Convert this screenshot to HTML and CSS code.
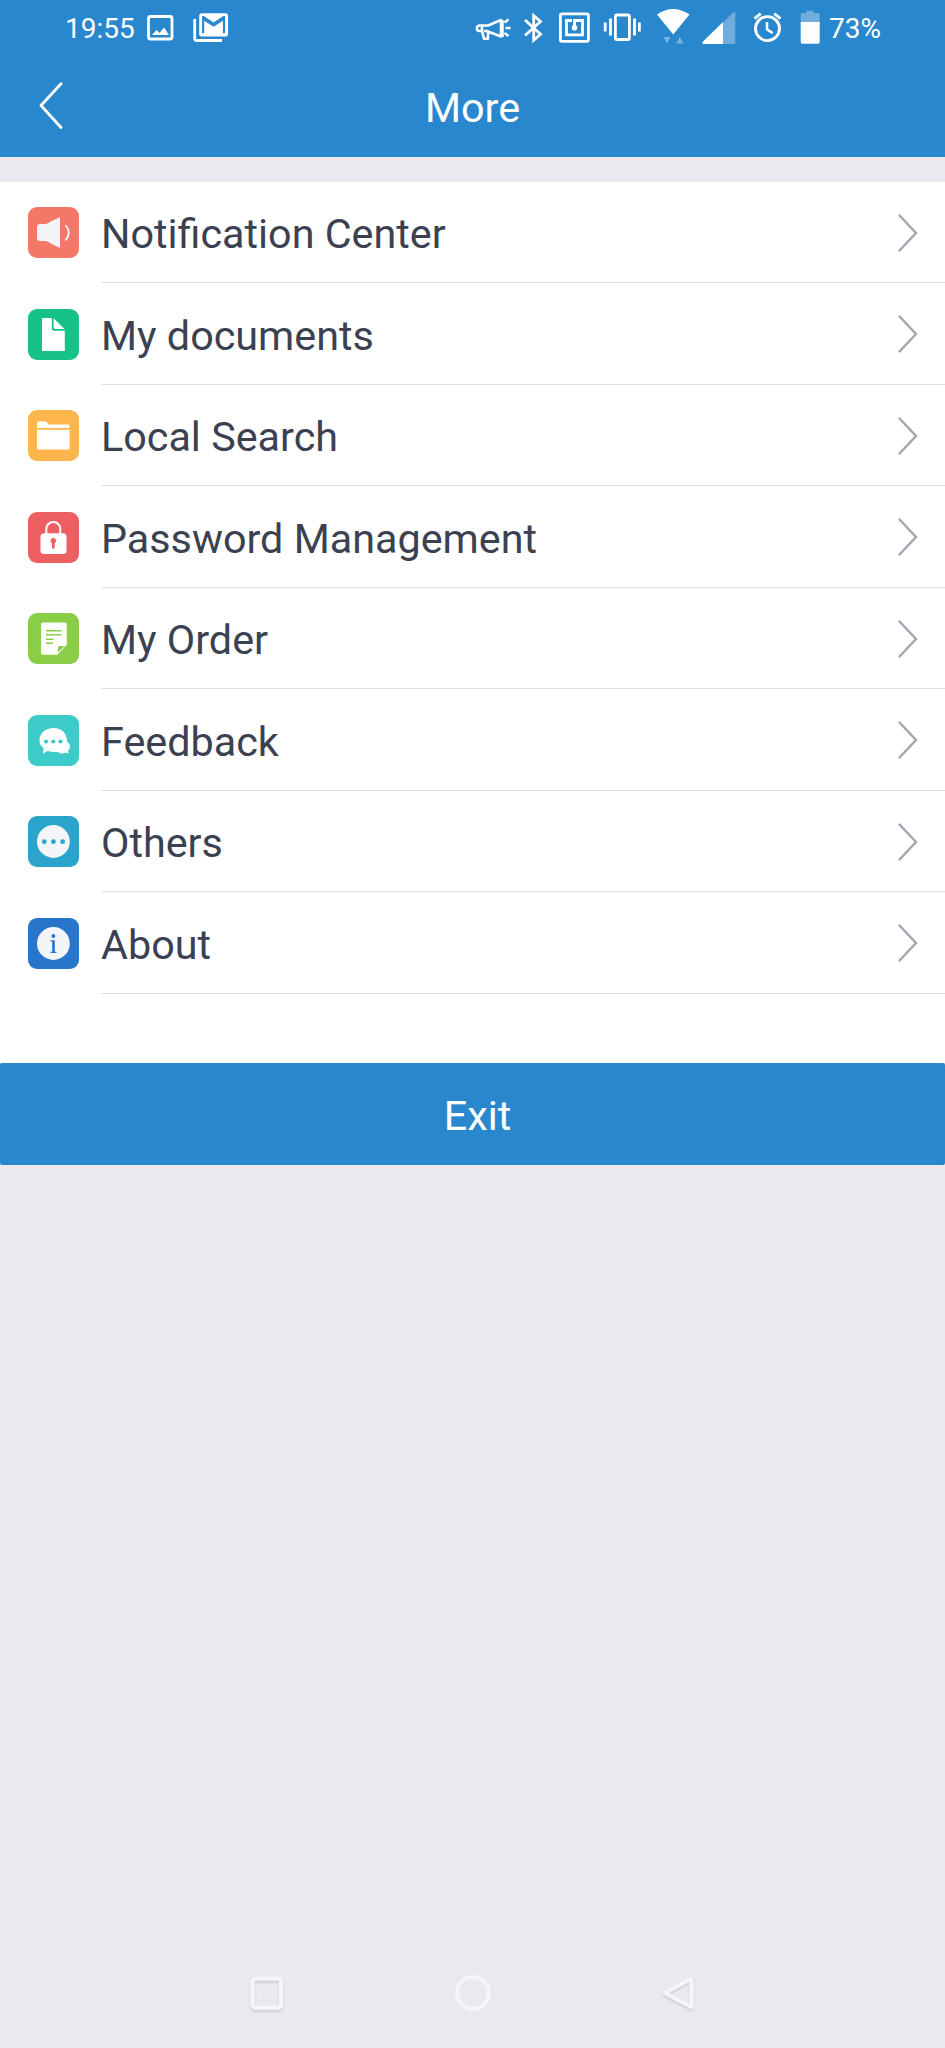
FILE: index.html
```html
<!DOCTYPE html>
<html lang="en">
<head>
<meta charset="utf-8">
<title>More</title>
<link rel="stylesheet" href="styles.css">
</head>
<body>
<div class="screen">
  <header class="top">
    <div class="status">
      <span class="time">19:55</span>
      <svg width="40" height="56" viewBox="140 0 40 56"><rect x="148.500" y="16.500" width="23.500" height="22.500" rx="2" fill="none" stroke="#fff" stroke-width="2.800"/><path d="M152 35l4.500-5 3 3 4.500-5.500 5 7.500z" fill="#fff"/></svg>
      <svg class="push" width="60" height="56" viewBox="180 0 60 56"><path d="M194.700 19v19.500q0 2 2 2H222" fill="none" stroke="#fff" stroke-width="2.800"/><rect x="199.200" y="13.200" width="28.800" height="23.200" rx="2.500" fill="#fff"/><path transform="translate(196.300 7.400) scale(1.440)" d="M20 18h-1.500V9.250L12 13.500 5.500 9.250V18H4V6h1.200L12 10.500 18.800 6H20z" fill="#2987cd"/></svg>

      <svg width="46" height="56" viewBox="470 0 46 56" fill="none" stroke="#fff" stroke-width="2.500" stroke-linejoin="round"><path d="M482 25.500h-2.500a2.700 2.700 0 0 0 0 5.400h2.500M482 25.500v5.400l2 7.800h4v-7.200l13 5v-16.500l-13 5.500z"/><path d="M484 31h4M502.500 20v17"/><path d="M504.500 22.500l4-3M505.500 28h5M504.500 33l4 3"/></svg>
      <svg width="36" height="56" viewBox="516 0 36 56"><path d="M525 20l15.500 14.200-6.800 6V15.500l6.800 6L525 35.500" fill="none" stroke="#fff" stroke-width="2.800"/></svg>
      <svg width="44" height="56" viewBox="552 0 44 56" fill="none" stroke="#fff" stroke-width="2.800"><rect x="560.400" y="13.900" width="28" height="27.400" rx="1.500"/><path d="M572 20.500h-5.500v14.300h16V20.500h-8v7"/><circle cx="574.500" cy="27.800" r="2.800" fill="#fff" stroke="none"/></svg>
      <svg width="54" height="56" viewBox="596 0 54 56" fill="none" stroke="#fff" stroke-width="2.800"><rect x="615.400" y="15" width="14" height="24.500" rx="1.500"/><path d="M610.500 18.500v17M605.200 22.500v9M634.500 18.500v17M639.400 22.500v9"/></svg>
      <svg width="46" height="56" viewBox="650 0 46 56"><path d="M657 14.500q16-11 32.500 0L673.200 34.500z" fill="#fff"/><path d="M663.500 37h7l-3.500 6.500zM676 43.500h7.500l-3.700-6.500z" fill="#75b4e4"/></svg>
      <svg width="48" height="56" viewBox="696 0 48 56"><path d="M723 22.500l10.800-10.500q1.500-1 1.500.7V42.500q0 1.500-1.500 1.500H723z" fill="#70acdc"/><path d="M723 22v22h-20q-1.500-.8 0-2.500z" fill="#fff"/></svg>
      <svg width="50" height="56" viewBox="744 0 50 56" fill="none" stroke="#fff" stroke-width="2.900"><circle cx="767.500" cy="28.600" r="12"/><path d="M767 22v7.300l5.700 3.800" stroke-width="2.500"/><path d="M754.500 18.700l6.200-5M774.300 13.700l6.200 5"/></svg>
      <svg width="35" height="56" viewBox="794 0 35 56"><path d="M800.700 23V14.500q0-1.500 1.500-1.500h4v-2.300h7.500V13h4.500q1.500 0 1.500 1.500V23z" fill="#70acdc"/><path d="M800.700 22h19v20q0 1.700-1.500 1.700h-16q-1.500 0-1.500-1.700z" fill="#fff"/></svg>
      <span class="level">73%</span>
    </div>
    <div class="bar">
      <svg class="back" width="24" height="48" viewBox="0 0 24 48"><path d="M22 1.800L2 23.500 22 45.500" fill="none" stroke="#fff" stroke-width="2.800" stroke-linecap="round" stroke-linejoin="round"/></svg>
      <h1 class="title">More</h1>
    </div>
  </header>

  <ul class="menu">
    <li class="row">
      <svg class="icon" viewBox="0 0 51 51"><rect width="51" height="51" rx="9" fill="#f37868"/><path d="M9 20q0-3 3-3h5.500q3-.5 6-3L32 10.200V41l-8.500-4q-3-2.500-6-3H12q-3 0-3-3z" fill="#f4f3f7"/><path d="M37.500 18q6.500 7.500 0 15.500" fill="none" stroke="#f4f3f7" stroke-width="1.800"/></svg>
      <div class="cell"><span class="label">Notification Center</span><svg class="chev" viewBox="0 0 20 38"><path d="M1.500 1.500L18 19 1.500 36.500"/></svg></div>
    </li>
    <li class="row">
      <svg class="icon" viewBox="0 0 51 51"><rect width="51" height="51" rx="9" fill="#17c28a"/><path d="M14 9h9.800v10.500q0 2.200 2.200 2.200h10.800V42H14z" fill="#fff"/><path d="M25.600 9.300L36.500 20H27q-1.400 0-1.400-1.400z" fill="#fff"/></svg>
      <div class="cell"><span class="label">My documents</span><svg class="chev" viewBox="0 0 20 38"><path d="M1.500 1.500L18 19 1.500 36.500"/></svg></div>
    </li>
    <li class="row">
      <svg class="icon" viewBox="0 0 51 51"><rect width="51" height="51" rx="9" fill="#feb64c"/><path d="M9 18v-5q0-1.500 1.500-1.500h7q1 0 2 1.500t2 1.500h18.500q1.500 0 1.500 1.500v2z" fill="#fff"/><path d="M9 19.800h32.500V38q0 1.500-1.500 1.500H10.500Q9 39.500 9 38z" fill="#fff"/></svg>
      <div class="cell"><span class="label">Local Search</span><svg class="chev" viewBox="0 0 20 38"><path d="M1.500 1.500L18 19 1.500 36.500"/></svg></div>
    </li>
    <li class="row">
      <svg class="icon" viewBox="0 0 51 51"><rect width="51" height="51" rx="9" fill="#ee5f62"/><path d="M18.300 23v-6a7 7 0 0 1 14 0v6" fill="none" stroke="#fff" stroke-width="2"/><rect x="12.500" y="21.300" width="26" height="20.700" rx="3.500" fill="#fff"/><circle cx="25.300" cy="28.700" r="2.700" fill="#ee5f62"/><path d="M24 29h2.700v7q-1.300 1.500-2.700 0z" fill="#ee5f62"/></svg>
      <div class="cell"><span class="label">Password Management</span><svg class="chev" viewBox="0 0 20 38"><path d="M1.500 1.500L18 19 1.500 36.500"/></svg></div>
    </li>
    <li class="row">
      <svg class="icon" viewBox="0 0 51 51"><rect width="51" height="51" rx="9" fill="#89ce46"/><path d="M15 9.500h21.800q2 0 2 2v20L29.500 41.800H15q-2 0-2-2V11.500q0-2 2-2z" fill="#fff"/><path d="M30 39.500V35q0-2 2-2h4.500z" fill="#89ce46"/><path d="M18 17.700h15.500M18 21.700h15.500M18 26.200h7.500M18 30.300h7" stroke="#89ce46" stroke-width="1.500"/></svg>
      <div class="cell"><span class="label">My Order</span><svg class="chev" viewBox="0 0 20 38"><path d="M1.500 1.500L18 19 1.500 36.500"/></svg></div>
    </li>
    <li class="row">
      <svg class="icon" viewBox="0 0 51 51"><rect width="51" height="51" rx="9" fill="#3ccbc9"/><path d="M15 38.500l.5-5.500Q11.500 30 11.500 25.500C11.500 18 17.500 13 25.500 13S39 18 39 26.500q3 2 3 5t-2 4.500l.5 2.800-3-1.200q-4 2.200-7.500-.6-6 .5-10.500-1z" fill="#fff"/><g fill="#3ccbc9"><circle cx="18" cy="26.500" r="2.100"/><circle cx="25.300" cy="26.500" r="2.100"/><circle cx="32.500" cy="26.500" r="2.100"/></g></svg>
      <div class="cell"><span class="label">Feedback</span><svg class="chev" viewBox="0 0 20 38"><path d="M1.500 1.500L18 19 1.500 36.500"/></svg></div>
    </li>
    <li class="row">
      <svg class="icon" viewBox="0 0 51 51"><rect width="51" height="51" rx="9" fill="#2aa4ca"/><circle cx="25.400" cy="25.500" r="16.400" fill="#f4f5f9"/><g fill="#2aa4ca"><circle cx="16.300" cy="25.700" r="2.400"/><circle cx="25.400" cy="25.700" r="2.400"/><circle cx="34.600" cy="25.700" r="2.400"/></g></svg>
      <div class="cell"><span class="label">Others</span><svg class="chev" viewBox="0 0 20 38"><path d="M1.500 1.500L18 19 1.500 36.500"/></svg></div>
    </li>
    <li class="row">
      <svg class="icon" viewBox="0 0 51 51"><rect width="51" height="51" rx="9" fill="#2876cb"/><circle cx="25.400" cy="25.500" r="16.400" fill="#f4f5f9"/><circle cx="25.400" cy="18" r="2" fill="#2876cb"/><path d="M22.500 22.200h4.300v11.500h1.700v1.200h-6v-1.200h1.700V23.400h-1.700z" fill="#2876cb"/></svg>
      <div class="cell"><span class="label">About</span><svg class="chev" viewBox="0 0 20 38"><path d="M1.500 1.500L18 19 1.500 36.500"/></svg></div>
    </li>
  </ul>

  <button class="exit">Exit</button>

  <nav class="nav">
    <svg width="38" height="42" viewBox="0 0 38 42" class="raised"><rect x="4.500" y="5.800" width="28.500" height="29" rx="3"/></svg>
    <svg width="38" height="42" viewBox="0 0 38 42"><circle cx="19" cy="20" r="16"/></svg>
    <svg width="38" height="42" viewBox="0 0 38 42" class="raised"><path d="M31.500 5.500v28.500L5 20z"/></svg>
  </nav>
</div>
</body>
</html>
```
FILE: styles.css
```css
* { box-sizing: border-box; }

body {
  margin: 0;
  background: #eae9ee;
  font-family: Roboto, "Liberation Sans", sans-serif;
  color: #3b4150;
}

.screen {
  display: flex;
  flex-direction: column;
  width: 945px;
  height: 2048px;
}

svg { display: block; flex: none; }

.top {
  height: 156.5px;
  background: #2987cd;
  color: #fff;
}

.status {
  display: flex;
  height: 56px;
  padding-left: 65px;
  font-size: 28px;
  line-height: 58px;
}

.time { width: 75px; }
.push { margin-right: 230px; }

.bar {
  display: grid;
  grid-template-columns: 120px 1fr 120px;
  align-items: center;
  height: 100px;
}

.back { margin-left: 39px; }

.title {
  margin: 0;
  text-align: center;
  font-size: 41.3px;
  font-weight: 400;
  line-height: 48px;
  padding-top: 3px;
}

.menu {
  margin: 25.5px 0 0;
  padding: 0 0 69.5px;
  list-style: none;
  background: #fff;
}

.row {
  display: flex;
  align-items: center;
  height: 101.48px;
  padding-left: 28px;
}

.icon { width: 51px; height: 51px; }

.cell {
  display: flex;
  flex: 1;
  align-items: center;
  justify-content: space-between;
  height: 100%;
  margin-left: 22px;
  padding-right: 27px;
  border-bottom: 1px solid #dedfe2;
}

.label {
  padding-top: 4px;
  font-size: 41.3px;
  line-height: 48px;
}

.chev {
  width: 20px;
  height: 38px;
  margin-top: 1px;
  fill: none;
  stroke: #a3a5b1;
  stroke-width: 2.4px;
  stroke-linecap: round;
}

.exit {
  height: 101.5px;
  padding: 4px 0 0 10px;
  border: 0;
  border-radius: 2px;
  background: #2987cd;
  color: #fff;
  font: 400 41.3px/48px Roboto, "Liberation Sans", sans-serif;
}

.nav {
  display: flex;
  justify-content: center;
  gap: 168px;
  margin-top: auto;
  padding-bottom: 33px;
}

.nav svg {
  fill: none;
  stroke: #f6f5fa;
  stroke-width: 4px;
  stroke-linejoin: round;
}

.nav .raised { filter: drop-shadow(0 2px 1px #cfced3); }
```
